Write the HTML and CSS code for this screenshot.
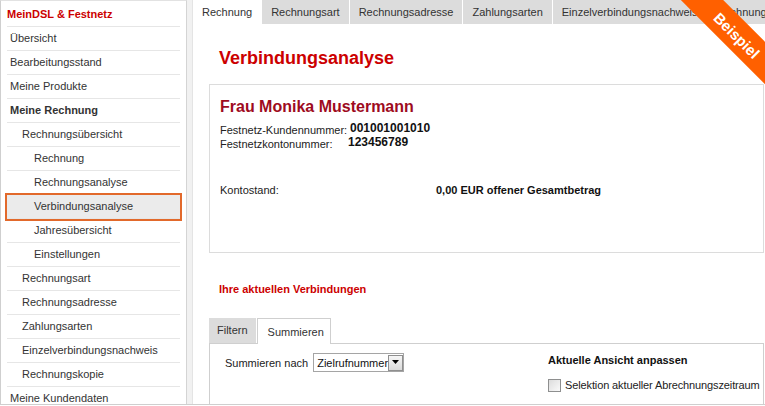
FILE: index.html
```html
<!DOCTYPE html>
<html lang="de">
<head>
<meta charset="utf-8">
<title>Verbindungsanalyse</title>
<link rel="stylesheet" href="styles.css">
</head>
<body>
<div class="page">
  <nav class="sidebar">
    <ul class="nav">
      <li class="nav-item head">MeinDSL &amp; Festnetz</li>
      <li class="nav-item l1">Übersicht</li>
      <li class="nav-item l1">Bearbeitungsstand</li>
      <li class="nav-item l1">Meine Produkte</li>
      <li class="nav-item l1 strong">Meine Rechnung</li>
      <li class="nav-item l2">Rechnungsübersicht</li>
      <li class="nav-item l3">Rechnung</li>
      <li class="nav-item l3">Rechnungsanalyse</li>
      <li class="nav-item l3 active">Verbindungsanalyse</li>
      <li class="nav-item l3">Jahresübersicht</li>
      <li class="nav-item l3">Einstellungen</li>
      <li class="nav-item l2">Rechnungsart</li>
      <li class="nav-item l2">Rechnungsadresse</li>
      <li class="nav-item l2">Zahlungsarten</li>
      <li class="nav-item l2">Einzelverbindungsnachweis</li>
      <li class="nav-item l2">Rechnungskopie</li>
      <li class="nav-item l1">Meine Kundendaten</li>
    </ul>
  </nav>
  <div class="gutter"></div>
  <main class="main">
    <div class="tabs">
      <span class="tab active">Rechnung</span>
      <span class="tab">Rechnungsart</span>
      <span class="tab">Rechnungsadresse</span>
      <span class="tab">Zahlungsarten</span>
      <span class="tab">Einzelverbindungsnachweis</span>
      <span class="tab">Rechnungskopie</span>
    </div>
    <div class="content">
      <h1 class="title">Verbindungsanalyse</h1>
      <section class="card">
        <div class="name">Frau Monika Mustermann</div>
        <div class="ids">
          <span class="lbl">Festnetz-Kundennummer:</span><span class="val">001001001010</span>
          <span class="lbl">Festnetzkontonummer:</span><span class="val shift">123456789</span>
        </div>
        <div class="balance">
          <span class="lbl">Kontostand:</span><span class="bval">0,00 EUR offener Gesamtbetrag</span>
        </div>
      </section>
      <h2 class="subtitle">Ihre aktuellen Verbindungen</h2>
      <div class="subtabs">
        <span class="subtab">Filtern</span>
        <span class="subtab active">Summieren</span>
      </div>
      <div class="panel">
        <div class="sum-row">
          <span class="sum-label">Summieren nach</span>
          <div class="select">
            <span class="select-text">Zielrufnummer</span>
            <span class="select-btn"><svg width="9" height="5" viewBox="0 0 9 5"><path d="M1 0h7L4.5 4z" fill="#000"/></svg></span>
          </div>
        </div>
        <div class="view">
          <div class="view-title">Aktuelle Ansicht anpassen</div>
          <label class="check-row"><span class="checkbox"></span>Selektion aktueller Abrechnungszeitraum</label>
        </div>
      </div>
    </div>
  </main>
  <div class="ribbon"><span class="ribbon-text">Beispiel</span></div>
</div>
</body>
</html>
```

FILE: styles.css
```css
* { box-sizing: border-box; }
html, body { margin: 0; padding: 0; background: #fff; }
body {
  font-family: "Liberation Sans", Arial, sans-serif;
  color: #333;
  width: 765px;
  height: 406px;
  overflow: hidden;
}
.page {
  position: relative;
  display: flex;
  width: 765px;
  height: 405px;
  border-bottom: 1px solid #cfcfcf;
  overflow: hidden;
}

/* Sidebar */
.sidebar {
  width: 187px;
  flex: none;
  border-left: 1px solid #cfcfcf;
  border-right: 1px solid #d4d4d4;
  border-top: 1px solid #e2e2e2;
  padding: 2px 6px 0 6px;
}
.nav { list-style: none; margin: 0; padding: 0; }
.nav-item {
  height: 24px;
  line-height: 23px;
  border-bottom: 1px solid #e6e6e6;
  font-size: 11px;
  color: #333;
  white-space: nowrap;
}
.nav-item.head { color: #cc0000; font-weight: bold; padding-left: 0; }
.nav-item.l1 { padding-left: 3px; }
.nav-item.l2 { padding-left: 15px; }
.nav-item.l3 { padding-left: 27px; }
.nav-item.strong { font-weight: bold; }
.nav-item.active {
  position: relative;
  background: #ebebeb;
  outline: 2px solid #e2692b;
}

.gutter {
  width: 6px;
  flex: none;
  background: #f1f1f1;
  border-right: 1px solid #e4e4e4;
}

/* Main */
.main {
  flex: 1;
  min-width: 0;
  display: flex;
  flex-direction: column;
}
.tabs {
  display: flex;
  height: 24px;
  background: #dcdcdc;
  white-space: nowrap;
  overflow: hidden;
  flex: none;
}
.tab {
  flex: none;
  padding: 0 9px;
  line-height: 24px;
  font-size: 11px;
  color: #333;
  border-right: 1px solid #fff;
}
.tab.active { background: #fff; }

.content {
  flex: 1;
  display: flex;
  flex-direction: column;
  padding: 0 1px 0 16px;
}
.title {
  margin: 23px 0 15px 10px;
  font-size: 18px;
  line-height: 22px;
  font-weight: bold;
  color: #cc0000;
}
.card {
  height: 169px;
  border: 1px solid #dcdcdc;
  padding: 12px 10px 0 10px;
  flex: none;
}
.name {
  font-size: 16px;
  line-height: 20px;
  font-weight: bold;
  color: #9e0b1e;
  margin-bottom: 6px;
}
.ids {
  display: grid;
  grid-template-columns: 130px auto;
  line-height: 14px;
}
.lbl { font-size: 11px; color: #222; }
.val { font-size: 12px; font-weight: bold; color: #111; margin-top: -2px; }
.val.shift { margin-left: -2px; }
.balance {
  margin-top: 32px;
  display: grid;
  grid-template-columns: 216px auto;
  line-height: 14px;
}
.bval { font-size: 11px; font-weight: bold; color: #111; }

.subtitle {
  margin: 29px 0 0 10px;
  font-size: 11px;
  line-height: 14px;
  font-weight: bold;
  color: #cc0000;
}
.subtabs {
  margin-top: 22px;
  display: flex;
  height: 26px;
  border-bottom: 1px solid #cfcfcf;
  flex: none;
}
.subtab {
  padding: 0 8px;
  line-height: 25px;
  font-size: 11px;
  color: #333;
  background: #dcdcdc;
}
.subtab.active {
  background: #fff;
  border: 1px solid #cfcfcf;
  border-bottom: none;
  height: 26px;
  margin-left: 1px;
  padding: 1px 6px 0 10px;
  position: relative;
}
.panel {
  flex: 1;
  display: grid;
  grid-template-columns: 323px 1fr;
  align-items: start;
  border-left: 1px solid #cfcfcf;
  border-right: 1px solid #cfcfcf;
  padding: 9px 0 0 15px;
}
.sum-row {
  display: flex;
  align-items: center;
  font-size: 11px;
  color: #222;
}
.sum-label { margin-right: 5px; }
.select {
  display: flex;
  align-items: center;
  width: 91px;
  height: 19px;
  border: 1px solid #a5a5a5;
  background: #fff;
  padding-left: 3px;
  overflow: hidden;
}
.select-text {
  flex: 1;
  font-size: 11px;
  color: #111;
  white-space: nowrap;
  overflow: hidden;
}
.select-btn {
  width: 15px;
  height: 16px;
  border: 1px solid #8f8f8f;
  background: linear-gradient(#f6f6f6, #dadada);
  display: flex;
  align-items: center;
  justify-content: center;
  flex: none;
}
.view { font-size: 11px; color: #111; white-space: nowrap; }
.view-title {
  font-weight: bold;
  line-height: 14px;
  margin-top: 0;
}
.check-row {
  display: flex;
  align-items: center;
  margin-top: 11px;
  color: #222;
  line-height: 14px;
  letter-spacing: -0.12px;
}
.checkbox {
  width: 13px;
  height: 13px;
  border: 1px solid #8e8f8f;
  background: linear-gradient(135deg, #dcdcdc, #fafafa);
  margin-right: 4px;
  flex: none;
}

/* Ribbon */
.ribbon {
  position: absolute;
  left: 652px;
  top: 20px;
  width: 170px;
  height: 30px;
  background: #ff6000;
  display: flex;
  align-items: center;
  justify-content: center;
  transform: rotate(45deg);
}
.ribbon-text {
  color: #fff;
  font-weight: bold;
  font-size: 15px;
  line-height: 15px;
}
```
